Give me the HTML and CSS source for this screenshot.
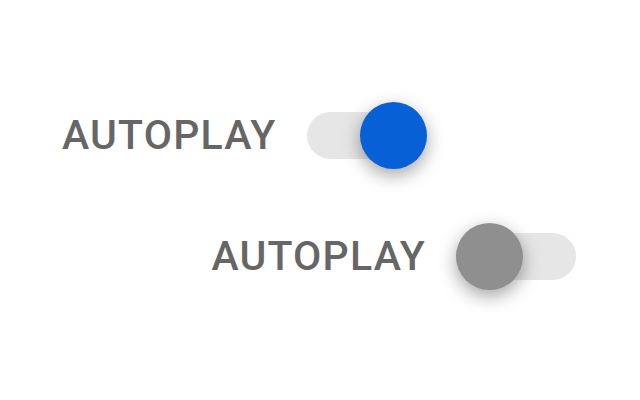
FILE: index.html
```html
<!DOCTYPE html>
<html lang="en">
<head>
    <meta charset="UTF-8">
    <meta name="viewport" content="width=device-width, initial-scale=1.0">
    <title>Autoplay Switches</title>
    <link rel="stylesheet" href="styles.css">
</head>
<body>
    <div class="settings">
        <label class="setting">
            <span class="setting-label">AUTOPLAY</span>
            <span class="switch on">
                <span class="thumb"></span>
            </span>
        </label>
        <label class="setting end">
            <span class="setting-label">AUTOPLAY</span>
            <span class="switch">
                <span class="thumb"></span>
            </span>
        </label>
    </div>
</body>
</html>
```

FILE: styles.css
```css
body {
    margin: 0;
    padding: 0;
    width: 640px;
    height: 400px;
    overflow: hidden;
    background-color: #ffffff;
    font-family: Roboto, "Liberation Sans", sans-serif;
}
.settings {
    display: flex;
    flex-direction: column;
    align-items: flex-start;
    gap: 54px;
    padding: 102px 64px 0 62px;
}
.setting {
    display: flex;
    align-items: center;
    gap: 30px;
    height: 67px;
    cursor: pointer;
}
.setting.end {
    align-self: flex-end;
}
.setting-label {
    font-size: 41px;
    font-weight: 500;
    letter-spacing: 1.2px;
    color: #666666;
    line-height: 1;
}
.switch {
    position: relative;
    width: 120px;
    height: 47px;
    border-radius: 24px;
    background: #e6e6e6;
}
.thumb {
    position: absolute;
    top: -10px;
    left: 0;
    width: 67px;
    height: 67px;
    border-radius: 50%;
    background: #8f8f8f;
    box-shadow: 0 6px 18px rgba(0, 0, 0, 0.36);
    transition: left 0.2s ease-in-out;
}
.switch.on .thumb {
    left: 53px;
    background: #0860d6;
}
```
